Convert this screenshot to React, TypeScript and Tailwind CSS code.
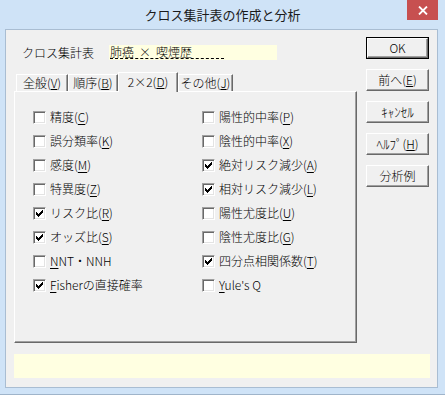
import React from "react";

type Item = { pre: string; key?: string; post?: string; checked?: boolean };

const left: Item[] = [
  { pre: "精度(", key: "C", post: ")" },
  { pre: "誤分類率(", key: "K", post: ")" },
  { pre: "感度(", key: "M", post: ")" },
  { pre: "特異度(", key: "Z", post: ")" },
  { pre: "リスク比(", key: "R", post: ")", checked: true },
  { pre: "オッズ比(", key: "S", post: ")", checked: true },
  { pre: "", key: "N", post: "NT・NNH" },
  { pre: "", key: "F", post: "isherの直接確率", checked: true },
];

const right: Item[] = [
  { pre: "陽性的中率(", key: "P", post: ")" },
  { pre: "陰性的中率(", key: "X", post: ")" },
  { pre: "絶対リスク減少(", key: "A", post: ")", checked: true },
  { pre: "相対リスク減少(", key: "L", post: ")", checked: true },
  { pre: "陽性尤度比(", key: "U", post: ")" },
  { pre: "陰性尤度比(", key: "G", post: ")" },
  { pre: "四分点相関係数(", key: "T", post: ")", checked: true },
  { pre: "", key: "Y", post: "ule's Q" },
];

// classic 7x7 check glyph, one 3px run per column
const checkRuns = [2, 3, 4, 3, 2, 1, 0];

function CheckBox({ checked }: { checked?: boolean }) {
  return (
    <div className="h-[13px] w-[13px] shrink-0 border border-t-[#a0a0a0] border-l-[#a0a0a0] border-r-white border-b-white bg-white shadow-[inset_1px_1px_0_#696969,inset_-1px_-1px_0_#e3e3e3]">
      {checked && (
        <svg width="11" height="11" viewBox="0 0 11 11" shapeRendering="crispEdges">
          {checkRuns.map((s, i) => (
            <rect key={i} x={2 + i} y={2 + s} width="1" height="3" fill="#000" />
          ))}
        </svg>
      )}
    </div>
  );
}

function Row({ item }: { item: Item }) {
  return (
    <div className="flex h-[24px] items-center gap-[4px]">
      <CheckBox checked={item.checked} />
      <span className="whitespace-nowrap">
        {item.pre}
        {item.key && <u className="underline-offset-2">{item.key}</u>}
        {item.post}
      </span>
    </div>
  );
}

function Btn({ children, def }: { children: React.ReactNode; def?: boolean }) {
  const face = (
    <div className="flex h-full w-full items-center justify-center border border-t-white border-l-white border-r-[#696969] border-b-[#696969] bg-[#f0f0f0] shadow-[inset_-1px_-1px_0_#a0a0a0]">
      {children}
    </div>
  );
  return def ? (
    <div className="h-[22px] w-[63px] border border-black">{face}</div>
  ) : (
    <div className="h-[22px] w-[63px]">{face}</div>
  );
}

function Tab({ children, w }: { children: React.ReactNode; w: string }) {
  return (
    <div className={`${w} flex h-[17px] items-center justify-center border-t border-l border-r border-t-white border-l-white border-r-[#696969] shadow-[inset_-1px_0_0_#a0a0a0]`}>
      {children}
    </div>
  );
}

export default function App() {
  return (
    <div className="flex h-[395px] w-[445px] flex-col bg-[#cfe3f7] font-['Noto_Sans_CJK_JP','Noto_Sans',sans-serif] text-[12px] font-light leading-[14px] text-black">
      {/* title bar */}
      <div className="relative flex h-[29px] shrink-0 items-center justify-center">
        <span className="text-[13px] font-normal leading-[16px] text-[#1a1a1a]">クロス集計表の作成と分析</span>
        <div className="absolute right-[7px] top-0 flex h-[20px] w-[31px] items-center justify-center bg-[#c75050]">
          <svg width="10" height="9" viewBox="0 0 10 9">
            <path d="M1 0.5 L9 8.5 M9 0.5 L1 8.5" stroke="#fff" strokeWidth="1.8" />
          </svg>
        </div>
      </div>

      {/* client */}
      <div className="ml-[5px] mr-[7px] flex h-[359px] flex-col border border-[#a9bdd2] bg-[#f0f0f0] pl-[8px] pr-[7px]">
        <div className="flex gap-[9px]">
          <div className="flex w-[343px] flex-col pt-[15px]">
            <div className="flex h-[15px] items-center">
              <span className="w-[95px] pl-[8px]">クロス集計表</span>
              <div className="h-[15px] w-[168px] bg-[#ffffe1] pl-[1px]">
                <span className="inline-block h-[14px] w-[114px] border-b border-dashed border-black leading-[13px]">
                  肺癌<span className="mx-[5px]">×</span>喫煙歴
                </span>
              </div>
            </div>

            {/* tabs */}
            <div className="mt-[12px] flex h-[19px] items-end pl-[2px]">
              <Tab w="w-[52px]">
                全般(<u>V</u>)
              </Tab>
              <Tab w="w-[50px]">
                順序(<u>B</u>)
              </Tab>
              <div className="relative z-10 -mb-px flex h-[20px] w-[60px] items-start justify-center border-t border-l border-r border-t-white border-l-white border-r-[#696969] bg-[#f0f0f0] pt-[2px] shadow-[inset_-1px_0_0_#a0a0a0]">
                2×2(<u>D</u>)
              </div>
              <Tab w="w-[55px]">
                その他(<u>J</u>)
              </Tab>
            </div>

            {/* panel */}
            <div className="grid h-[252px] grid-cols-[169px_1fr] border border-t-white border-l-white border-r-[#696969] border-b-[#696969] pl-[18px] pt-[13px] shadow-[inset_-1px_-1px_0_#a0a0a0]">
              <div className="flex flex-col">
                {left.map((it, i) => (
                  <Row key={i} item={it} />
                ))}
              </div>
              <div className="flex flex-col">
                {right.map((it, i) => (
                  <Row key={i} item={it} />
                ))}
              </div>
            </div>
          </div>

          <div className="flex w-[63px] flex-col gap-[10px] pt-[7px]">
            <Btn def>OK</Btn>
            <Btn>
              前へ(<u>E</u>)
            </Btn>
            <Btn>
              <span className="text-[13px]">ｷｬﾝｾﾙ</span>
            </Btn>
            <Btn>
              <span className="text-[13px]">ﾍﾙﾌﾟ</span>(<u>H</u>)
            </Btn>
            <Btn>分析例</Btn>
          </div>
        </div>

        <div className="mt-[11px] h-[24px] w-[416px] bg-[#ffffe1]" />
      </div>
      <div className="flex-1 border-b border-[#9fb4ca]" />
    </div>
  );
}
